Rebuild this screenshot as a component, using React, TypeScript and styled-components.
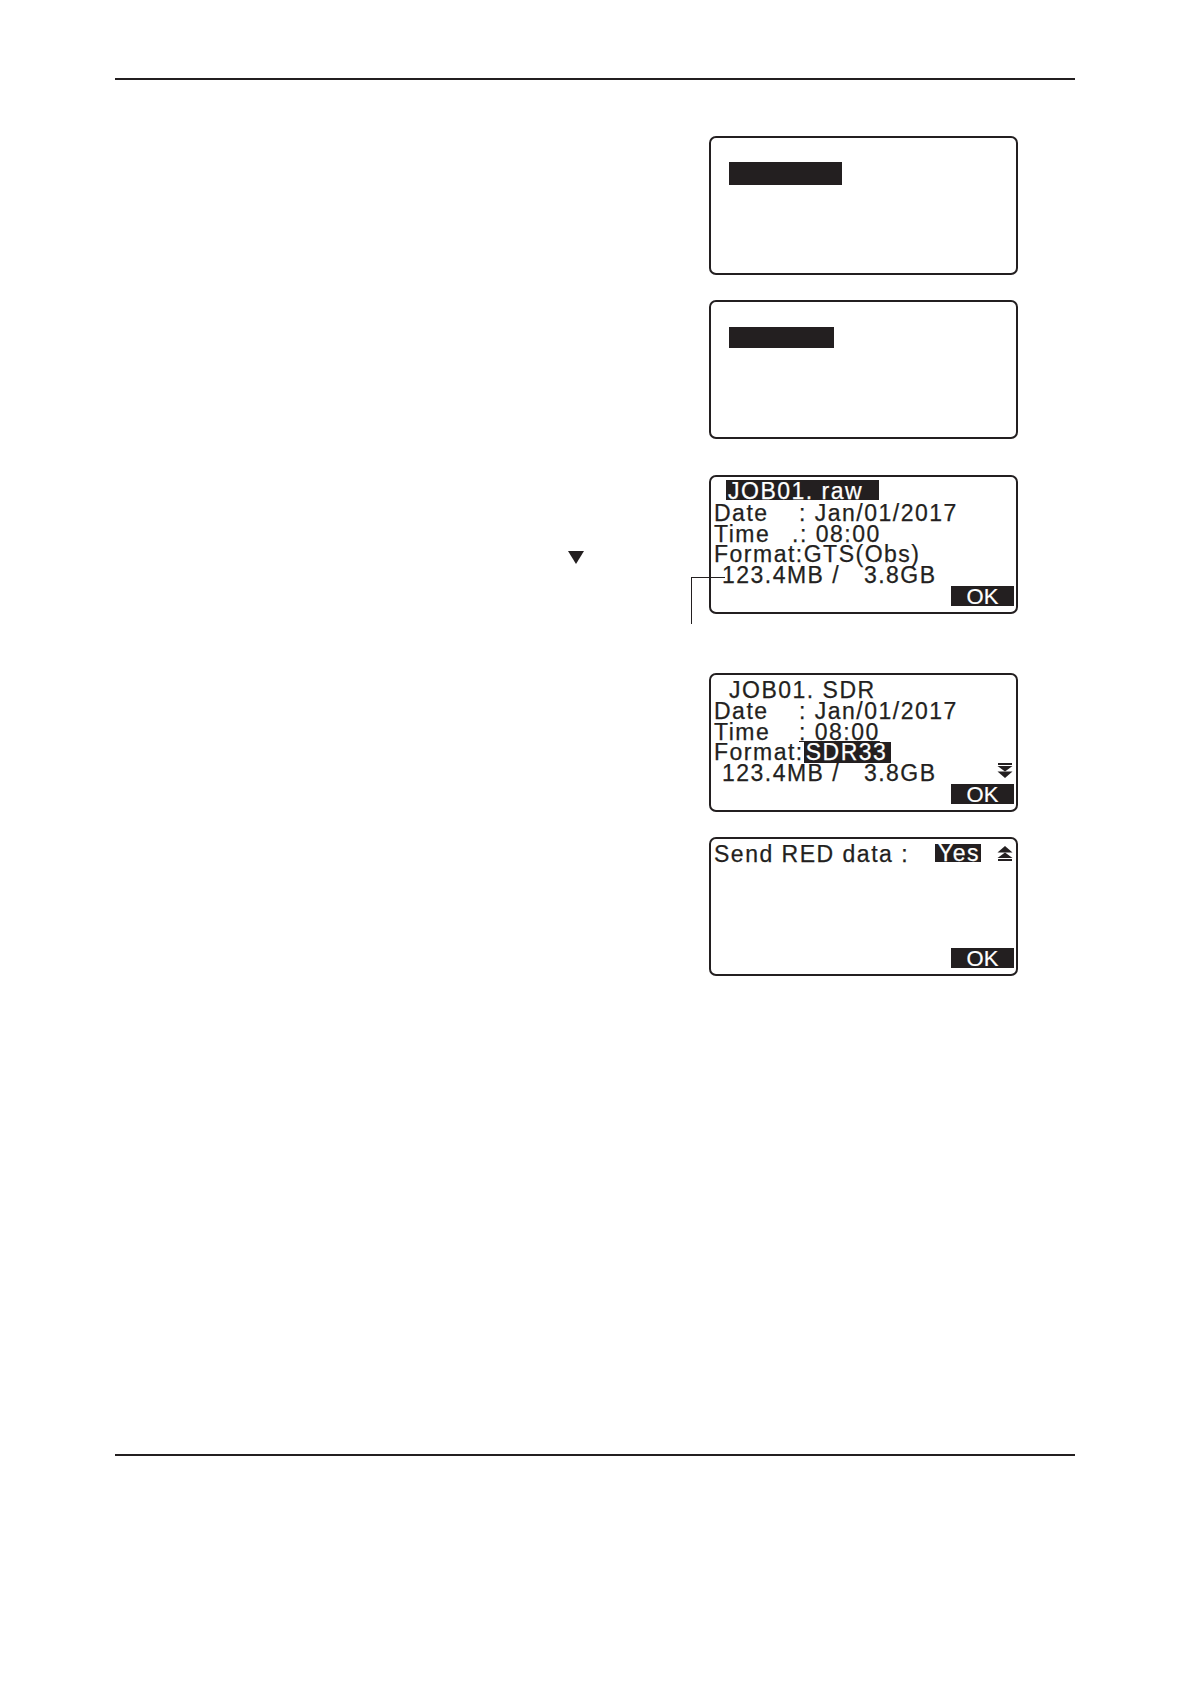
import React, { FC, ReactNode } from "react";
import styled, { createGlobalStyle } from "styled-components";

const ink = "#231f20";

const GlobalStyle = createGlobalStyle`
    html, body {
        margin: 0;
        padding: 0;
        background: #fff;
    }
    body {
        font-family: "Liberation Sans", Arial, sans-serif;
        color: ${ink};
    }
`;

const Page = styled.div`
    width: 1191px;
    height: 1684px;
    box-sizing: border-box;
    padding: 78px 116px 228px 115px;
    display: flex;
    flex-direction: column;
`;

const Rule = styled.div<{ $bottom?: boolean }>`
    height: 2px;
    background: ${ink};
    margin-top: ${(p) => (p.$bottom ? "auto" : "0")};
`;

const Steps = styled.div`
    margin-top: 56px;
    display: flex;
    flex-direction: column;
`;

const Step = styled.div<{ $gap: number }>`
    display: grid;
    grid-template-columns: 594px 309px;
    margin-top: ${(p) => p.$gap}px;
`;

const Side = styled.div`
    position: relative;
`;

const Marker = styled.svg`
    display: block;
    margin: 76px 0 0 453px;
`;

const Screen = styled.div`
    position: relative;
    width: 309px;
    height: 139px;
    box-sizing: border-box;
    border: 2px solid ${ink};
    border-radius: 7px;
    padding: 5px 2px 6px 3px;
    display: flex;
    flex-direction: column;
    font-size: 23px;
    letter-spacing: 1.5px;
    color: ${ink};
    -webkit-text-stroke: 0.25px ${ink};
`;

const Line = styled.div`
    display: flex;
    align-items: flex-start;
    height: 20.75px;
    line-height: 20.75px;
    white-space: pre;
`;

const Label = styled.span<{ $w: number }>`
    display: inline-block;
    width: ${(p) => p.$w}px;
`;

const Title = styled.span<{ $indent: number }>`
    padding-left: ${(p) => p.$indent}px;
`;

const TitleBar = styled.span`
    display: block;
    margin: -2px 0 0 12px;
    width: 153px;
    height: 20px;
    box-sizing: border-box;
    padding-left: 2px;
    line-height: 22px;
    background: ${ink};
    color: #fff;
    -webkit-text-stroke: 0.25px #fff;
`;

const Inverse = styled.span<{ $h: number; $w?: number; $pl?: number }>`
    display: inline-block;
    height: ${(p) => p.$h}px;
    line-height: ${(p) => p.$h}px;
    ${(p) => (p.$w ? `width: ${p.$w}px; box-sizing: border-box;` : "padding-right: 4px;")}
    padding-left: ${(p) => p.$pl ?? 0}px;
    background: ${ink};
    color: #fff;
    -webkit-text-stroke: 0.25px #fff;
`;

const Under = styled.span`
    text-decoration: underline;
    text-decoration-thickness: 1px;
    text-underline-offset: 1px;
`;

const Spacer = styled.span`
    flex: 1;
`;

const Arrow = styled.svg<{ $top: number }>`
    display: block;
    flex: 0 0 auto;
    margin: ${(p) => p.$top}px 1px 0 16px;
`;

const Blank = styled.div<{ $top: number; $w: number; $h: number }>`
    margin: ${(p) => p.$top}px 0 0 15px;
    width: ${(p) => p.$w}px;
    height: ${(p) => p.$h}px;
    background: ${ink};
`;

const OkKey = styled.div`
    margin-top: auto;
    align-self: flex-end;
    margin-right: 0;
    width: 63px;
    height: 20px;
    background: ${ink};
    color: #fff;
    font-size: 22px;
    letter-spacing: 0;
    line-height: 21px;
    text-align: center;
    -webkit-text-stroke: 0.2px #fff;
`;

const Callout = styled.div`
    position: absolute;
    left: -20px;
    top: 100px;
    width: 33px;
    height: 46px;
    border-top: 1px solid ${ink};
    border-left: 1px solid ${ink};
`;

const DoubleDown: FC<{ top: number }> = ({ top }) => (
    <Arrow $top={top} width="16" height="15" viewBox="0 0 16 15">
        <rect x="1" y="0" width="14" height="2" fill={ink} />
        <polygon points="0.5,3 15.5,3 8,8.5" fill={ink} />
        <polygon points="0.5,8.5 15.5,8.5 8,15" fill={ink} />
    </Arrow>
);

const DoubleUp: FC<{ top: number }> = ({ top }) => (
    <Arrow $top={top} width="16" height="15" viewBox="0 0 16 15">
        <polygon points="0.5,6.5 15.5,6.5 8,0" fill={ink} />
        <polygon points="0.5,12 15.5,12 8,6.5" fill={ink} />
        <rect x="1" y="13" width="14" height="2" fill={ink} />
    </Arrow>
);

const Row: FC<{ gap: number; side?: ReactNode; children: ReactNode }> = ({ gap, side, children }) => (
    <Step $gap={gap}>
        <Side>{side}</Side>
        {children}
    </Step>
);

export default function App() {
    return (
        <>
            <GlobalStyle />
            <Page>
                <Rule />
                <Steps>
                    <Row gap={0}>
                        <Screen>
                            <Blank $top={19} $w={113} $h={23} />
                        </Screen>
                    </Row>

                    <Row gap={25}>
                        <Screen>
                            <Blank $top={20} $w={105} $h={21} />
                        </Screen>
                    </Row>

                    <Row
                        gap={36}
                        side={
                            <Marker width="16" height="13" viewBox="0 0 16 13">
                                <polygon points="0,0 16,0 8,13" fill={ink} />
                            </Marker>
                        }
                    >
                        <Screen>
                            <Line>
                                <TitleBar>JOB01. raw</TitleBar>
                            </Line>
                            <Line>
                                <Label $w={85}>Date</Label>: Jan/01/2017
                            </Line>
                            <Line>
                                <Label $w={78}>Time</Label>.: 08:00
                            </Line>
                            <Line>Format:GTS(Obs)</Line>
                            <Line>{" 123.4MB /   3.8GB"}</Line>
                            <OkKey>OK</OkKey>
                            <Callout />
                        </Screen>
                    </Row>

                    <Row gap={59}>
                        <Screen>
                            <Line>
                                <Title $indent={15}>JOB01. SDR</Title>
                            </Line>
                            <Line>
                                <Label $w={85}>Date</Label>: Jan/01/2017
                            </Line>
                            <Line>
                                <Label $w={85}>Time</Label>
                                <Under>: 08:00</Under>
                            </Line>
                            <Line>
                                Format:<Inverse $h={21} $pl={2}>SDR33</Inverse>
                            </Line>
                            <Line>
                                {" 123.4MB /   3.8GB"}
                                <Spacer />
                                <DoubleDown top={0} />
                            </Line>
                            <OkKey>OK</OkKey>
                        </Screen>
                    </Row>

                    <Row gap={25}>
                        <Screen>
                            <Line>
                                Send RED data :
                                <Spacer />
                                <Inverse $h={18} $w={46} $pl={3}>
                                    Yes
                                </Inverse>
                                <DoubleUp top={2} />
                            </Line>
                            <OkKey>OK</OkKey>
                        </Screen>
                    </Row>
                </Steps>
                <Rule $bottom />
            </Page>
        </>
    );
}
